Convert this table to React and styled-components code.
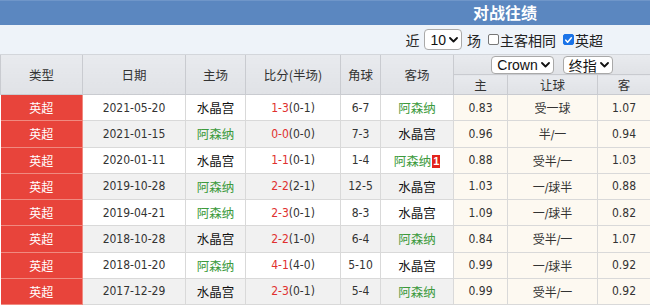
import React from 'react';
import styled, { createGlobalStyle } from 'styled-components';

const GlobalStyle = createGlobalStyle`
    body {
        margin: 0;
        background: #fff;
        font-family: "DejaVu Sans Condensed", "Liberation Sans", "Noto Sans CJK SC", sans-serif;
    }
    #root {
        width: 650px;
        height: 308px;
        overflow: hidden;
    }
`;

const matches = [
    { date: '2021-05-20', home: '水晶宫', ft: '1-3', ht: '(0-1)', corner: '6-7', away: '阿森纳', h: '0.83', line: '受一球', a: '1.07' },
    { date: '2021-01-15', home: '阿森纳', ft: '0-0', ht: '(0-0)', corner: '7-3', away: '水晶宫', h: '0.96', line: '半/一', a: '0.94' },
    { date: '2020-01-11', home: '水晶宫', ft: '1-1', ht: '(0-1)', corner: '1-4', away: '阿森纳', card: 1, h: '0.88', line: '受半/一', a: '1.03' },
    { date: '2019-10-28', home: '阿森纳', ft: '2-2', ht: '(2-1)', corner: '12-5', away: '水晶宫', h: '1.03', line: '一/球半', a: '0.88' },
    { date: '2019-04-21', home: '阿森纳', ft: '2-3', ht: '(0-1)', corner: '8-3', away: '水晶宫', h: '1.09', line: '一/球半', a: '0.82' },
    { date: '2018-10-28', home: '水晶宫', ft: '2-2', ht: '(1-0)', corner: '6-4', away: '阿森纳', h: '0.84', line: '受半/一', a: '1.07' },
    { date: '2018-01-20', home: '阿森纳', ft: '4-1', ht: '(4-0)', corner: '5-10', away: '水晶宫', h: '0.99', line: '一/球半', a: '0.92' },
    { date: '2017-12-29', home: '水晶宫', ft: '2-3', ht: '(0-1)', corner: '5-4', away: '阿森纳', h: '0.99', line: '受半/一', a: '0.92' },
];

const Chevron = () => (
    <svg width="9" height="6" viewBox="0 0 9 6">
        <path d="M1 1l3.5 3.5L8 1" fill="none" stroke="#111" strokeWidth="1.8" strokeLinecap="round" strokeLinejoin="round" />
    </svg>
);

function Check({ on }) {
    return (
        <CheckBox $on={on}>
            {on && (
                <svg width="10" height="10" viewBox="0 0 10 10">
                    <path d="M2 5.2l2 2.2L8.2 2.5" fill="none" stroke="#fff" strokeWidth="1.7" strokeLinecap="round" strokeLinejoin="round" />
                </svg>
            )}
        </CheckBox>
    );
}

function Team({ name, card }) {
    return (
        <>
            <TeamName $home={name === '水晶宫'}>{name}</TeamName>
            {card ? <RedCard>{card}</RedCard> : null}
        </>
    );
}

export default function App() {
    return (
        <Wrapper>
            <GlobalStyle />
            <TitleBar>对战往绩</TitleBar>
            <FilterBar>
                <span>近</span>
                <FakeSelect>10 <Chevron /></FakeSelect>
                <span>场</span>
                <Label><Check on={false} />主客相同</Label>
                <Label><Check on />英超</Label>
            </FilterBar>
            <Table>
                <colgroup>
                    <col style={{ width: 82 }} />
                    <col style={{ width: 103 }} />
                    <col style={{ width: 60 }} />
                    <col style={{ width: 95 }} />
                    <col style={{ width: 40 }} />
                    <col style={{ width: 73 }} />
                    <col style={{ width: 54 }} />
                    <col style={{ width: 90 }} />
                    <col style={{ width: 53 }} />
                </colgroup>
                <thead>
                    <tr>
                        <Th rowSpan={2}>类型</Th>
                        <Th rowSpan={2}>日期</Th>
                        <Th rowSpan={2}>主场</Th>
                        <Th rowSpan={2}>比分(半场)</Th>
                        <Th rowSpan={2}>角球</Th>
                        <Th rowSpan={2}>客场</Th>
                        <Th colSpan={3}>
                            <SelectGroup>
                                <FakeSelect $small>Crown <Chevron /></FakeSelect>
                                <FakeSelect $small>终指 <Chevron /></FakeSelect>
                            </SelectGroup>
                        </Th>
                    </tr>
                    <tr>
                        <Th>主</Th>
                        <Th>让球</Th>
                        <Th>客</Th>
                    </tr>
                </thead>
                <tbody>
                    {matches.map((m, i) => (
                        <Row key={m.date} $alt={i % 2 === 1}>
                            <TypeCell>英超</TypeCell>
                            <Td>{m.date}</Td>
                            <Td><Team name={m.home} /></Td>
                            <Td><Score>{m.ft}</Score>{m.ht}</Td>
                            <Td>{m.corner}</Td>
                            <Td><Team name={m.away} card={m.card} /></Td>
                            <OddsCell>{m.h}</OddsCell>
                            <OddsCell>{m.line}</OddsCell>
                            <OddsCell>{m.a}</OddsCell>
                        </Row>
                    ))}
                </tbody>
            </Table>
        </Wrapper>
    );
}

const Wrapper = styled.div`
    width: 650px;
`;

const TitleBar = styled.div`
    height: 25px;
    box-sizing: border-box;
    padding-right: 113px;
    background: #5b87c0;
    border-top: 1px solid #6f96c9;
    color: #fff;
    font-family: "Noto Sans CJK SC", sans-serif;
    font-weight: bold;
    font-size: 16px;
    line-height: 23px;
    text-align: right;
`;

const FilterBar = styled.div`
    height: 30px;
    box-sizing: border-box;
    padding-right: 47px;
    display: flex;
    align-items: center;
    justify-content: flex-end;
    gap: 5px;
    background: #eef3f9;
    border-bottom: 1px solid #d3d6db;
    font-family: "Noto Sans CJK SC", sans-serif;
    font-size: 14px;
    color: #222;
`;

const FakeSelect = styled.span`
    display: inline-flex;
    align-items: center;
    gap: 3px;
    height: ${p => (p.$small ? 18 : 21)}px;
    box-sizing: border-box;
    padding: 0 3px 0 5px;
    background: #fff;
    border: 1px solid #a9a9a9;
    border-radius: 4px;
    font-family: "Liberation Sans", "Noto Sans CJK SC", sans-serif;
    font-size: 14px;
    color: #111;
`;

const Label = styled.span`
    display: inline-flex;
    align-items: center;
    gap: 1px;
    margin-left: 2px;
`;

const CheckBox = styled.span`
    display: inline-flex;
    align-items: center;
    justify-content: center;
    width: 11px;
    height: 11px;
    box-sizing: border-box;
    border-radius: 2px;
    border: 1px solid ${p => (p.$on ? '#1a73e8' : '#777')};
    background: ${p => (p.$on ? '#1a73e8' : '#fff')};
`;

const Table = styled.table`
    width: 650px;
    table-layout: fixed;
    border-collapse: collapse;
    font-size: 12px;
    color: #333;
`;

const Th = styled.th`
    height: 19px;
    padding: 0;
    font-weight: normal;
    font-family: "Noto Sans CJK SC", sans-serif;
    font-size: 12.5px;
    color: #333;
    background: linear-gradient(#e8eaee, #e0e2e6);
    border: 1px solid #c9cbd0;
    border-top: none;
`;

const SelectGroup = styled.div`
    display: flex;
    justify-content: center;
    gap: 9px;
`;

const Row = styled.tr`
    height: 26.25px;
    background: ${p => (p.$alt ? '#f1f1f1' : '#fff')};
`;

const Td = styled.td`
    padding: 0;
    text-align: center;
    border: 1px solid #d9d9d9;
    white-space: nowrap;
`;

const TypeCell = styled(Td)`
    background: #e8443b;
    color: #fff;
    font-family: "Noto Sans CJK SC", sans-serif;
    border-color: #f08a80;
    border-left: none;
`;

const OddsCell = styled(Td)`
    background: #fdf9f1;
`;

const Score = styled.span`
    color: #e0302e;
`;

const TeamName = styled.span`
    font-family: "Noto Sans CJK SC", sans-serif;
    color: ${p => (p.$home ? '#111' : '#3c9a3c')};
    font-size: 12.5px;
`;

const RedCard = styled.span`
    display: inline-block;
    margin-left: 1px;
    padding: 0 1px;
    background: #e3231c;
    color: #fff;
    font-family: "Liberation Sans", sans-serif;
    font-weight: bold;
    font-size: 11px;
    line-height: 13px;
    vertical-align: 1px;
`;
